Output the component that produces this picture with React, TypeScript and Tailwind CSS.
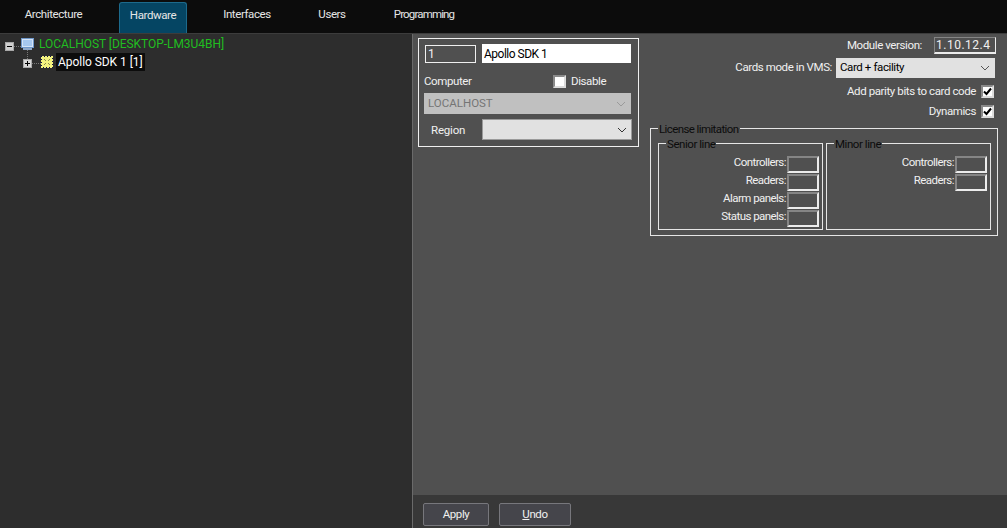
const font = "font-['Roboto','Liberation_Sans',sans-serif]"
const small = 'text-[11.5px] tracking-[-0.4px]'

function Tab({ label, active, w, tight }: { label: string; active?: boolean; w: string; tight?: boolean }) {
  return (
    <div
      className={`${w} h-[31px] pb-[5px] flex items-center justify-center rounded-t-[3px] text-[11.5px] ${
        tight ? 'tracking-[-0.85px]' : 'tracking-[-0.4px]'
      } text-[#e6e6e6] ${active ? 'bg-[#054563] border border-b-0 border-[#1d6a8c]' : ''}`}
    >
      {label}
    </div>
  )
}

function Check({ checked }: { checked?: boolean }) {
  return (
    <span className="w-[13px] h-[13px] bg-white border-2 border-[#8a8a8a] border-r-[#dcdcdc] border-b-[#dcdcdc] flex items-center justify-center shrink-0">
      {checked && (
        <svg width="9" height="9" viewBox="0 0 9 9">
          <path d="M1 4.5 L3.5 7 L8 1.5" fill="none" stroke="#000" strokeWidth="2" />
        </svg>
      )}
    </span>
  )
}

function Chevron({ color }: { color: string }) {
  return (
    <svg width="10" height="6" viewBox="0 0 10 6">
      <path d="M1 1 L5 5 L9 1" fill="none" stroke={color} strokeWidth="1" />
    </svg>
  )
}

function Limit({ label }: { label: string }) {
  return (
    <div className="flex items-center justify-end h-[18px] gap-px">
      <span className="pb-[2px] tracking-[-0.55px] text-[#f0f0f0]">{label}:</span>
      <span className="w-[32px] h-[17px] border-2 border-[#858585] border-r-[#ececec] border-b-[#ececec]" />
    </div>
  )
}

function Legend({ children, wide }: { children: string; wide?: boolean }) {
  return (
    <span
      className={`absolute left-[7px] top-[-7px] bg-[#505050] px-px leading-[14px] text-[#0c0c0c] ${
        wide ? 'tracking-[-0.6px]' : 'tracking-[-0.45px]'
      }`}
    >
      {children}
    </span>
  )
}

export default function App() {
  return (
    <div className={`${font} w-[1007px] h-[528px] flex flex-col bg-[#0c0c0c] overflow-hidden`}>
      <div className="h-[34px] flex items-start pt-[2px] pl-[8px] border-b border-[#3c3c3c]">
        <Tab label="Architecture" w="w-[91px]" />
        <div className="w-[20px]" />
        <Tab label="Hardware" active w="w-[68px]" />
        <div className="w-[20px]" />
        <Tab label="Interfaces" w="w-[80px]" />
        <Tab label="Users" w="w-[90px]" />
        <div className="w-[8px]" />
        <Tab label="Programming" tight w="w-[78px]" />
      </div>

      <div className="flex-1 flex min-h-0">
        <div className="w-[413px] shrink-0 bg-[#2d2d2d] border-r border-[#6a6a6a] pt-px pl-[5px] text-[12px] tracking-[-0.05px]">
          <div className="flex items-center h-[18px]">
            <span className="w-[9px] h-[9px] mt-[4px] bg-[#cfcfcf] border border-[#a8a8a8] flex items-center justify-center">
              <span className="w-[5px] h-px bg-black" />
            </span>
            <span className="w-[7px] mt-[4px] border-t border-dotted border-[#777]" />
            <svg width="13" height="13" viewBox="0 0 13 13" className="mr-[5px]">
              <rect x="0.5" y="0.5" width="12" height="9" fill="#d4e4f7" stroke="#6f97c9" />
              <rect x="2" y="2" width="9" height="6" fill="#a6c8ef" />
              <rect x="2" y="10" width="9" height="2" fill="#8fa8c8" />
            </svg>
            <span className="text-[#21bd21]">LOCALHOST [DESKTOP-LM3U4BH]</span>
          </div>
          <div className="flex items-center h-[18px] pl-[18px]">
            <span className="relative w-[9px] h-[9px] mt-[2px] bg-[#d8d8d8] border border-[#a8a8a8] flex items-center justify-center">
              <span className="w-[5px] h-px bg-black" />
              <span className="absolute w-px h-[5px] bg-black" />
              <span className="absolute left-[3px] top-[-10px] h-[9px] border-l border-dotted border-[#777]" />
            </span>
            <span className="w-[9px] mt-[2px] border-t border-dotted border-[#777]" />
            <svg width="12" height="12" viewBox="0 0 12 12" className="mr-[3px]">
              <rect width="12" height="12" fill="#f2f27e" />
              <path
                d="M0 0h1v1H0zM3 0h1v1H3zM6 0h1v1H6zM9 0h1v1H9zM0 3h1v1H0zM11 2h1v1h-1zM0 6h1v1H0zM11 5h1v1h-1zM0 9h1v1H0zM11 8h1v1h-1zM2 11h1v1H2zM5 11h1v1H5zM8 11h1v1H8zM11 11h1v1h-1z"
                fill="#10104a"
              />
              <path d="M3 3h1v1H3zM8 3h1v1H8zM4 4h1v1H4zM7 4h1v1H7zM4 7h1v1H4zM7 7h1v1H7zM3 8h1v1H3zM8 8h1v1H8z" fill="#8a8a50" />
            </svg>
            <span className="bg-[#0c0c0c] text-white h-[18px] w-[89px] pl-[2px] flex items-center whitespace-nowrap">
              Apollo SDK 1 [1]
            </span>
          </div>
        </div>

        <div className="flex-1 flex flex-col bg-[#505050] min-w-0">
          <div className={`flex-1 flex justify-between pt-[4px] pl-[5px] pr-[9px] ${small} text-[#f0f0f0]`}>
            <div className="w-[221px] h-[109px] border border-[#f0f0f0] pt-[5px] pl-[6px]">
              <div className="flex gap-[6px] items-start">
                <div className="w-[51px] h-[18px] mt-px border border-[#f0f0f0] flex items-center pl-[2px] text-[12px]">1</div>
                <div className="w-[149px] h-[19px] bg-white text-black flex items-center pl-[2px] text-[12px] tracking-[-0.5px]">Apollo SDK 1</div>
              </div>
              <div className="flex items-center h-[18px] mt-[9px] -ml-px">
                <span className="w-[129px] pt-[2px]">Computer</span>
                <Check />
                <span className="ml-[5px] pt-[2px]">Disable</span>
              </div>
              <div className="w-[207px] h-[21px] -ml-px bg-[#c0c0c0] mt-[3px] flex items-center justify-between pl-[4px] pr-[5px] text-[#757575] tracking-[0px]">
                LOCALHOST
                <Chevron color="#9a9a9a" />
              </div>
              <div className="flex items-center mt-[5px] -ml-px">
                <span className="w-[58px] pl-[7px] pt-[3px] tracking-[-0.2px]">Region</span>
                <div className="w-[150px] h-[21px] bg-[#e1e1e1] border border-[#9a9a9a] flex items-center justify-end pr-[4px]">
                  <Chevron color="#333" />
                </div>
              </div>
            </div>

            <div className="w-[348px] flex flex-col items-end">
              <div className="flex items-center h-[17px] -mt-px pr-[2px]">
                <span>Module version:</span>
                <span className="w-[62px] h-[17px] ml-[12px] border border-[#858585] border-r-[#ececec] border-b-2 border-b-[#ececec] flex items-center pl-[1px] text-[12px] tracking-[0.5px]">1.10.12.4</span>
              </div>
              <div className="flex items-center h-[20px] mt-[4px] pr-[3px]">
                <span className="mr-[4px]">Cards mode in VMS:</span>
                <div className="w-[159px] h-[20px] bg-[#e1e1e1] text-black flex items-center justify-between pl-[4px] pr-[5px]">
                  Card + facility
                  <Chevron color="#555" />
                </div>
              </div>
              <div className="flex items-center h-[20px] mt-[3px] pr-[4px] gap-[5px]">
                <span className="pt-[2px]">Add parity bits to card code</span>
                <Check checked />
              </div>
              <div className="flex items-center h-[20px] pr-[4px] gap-[5px]">
                <span className="pt-[2px]">Dynamics</span>
                <Check checked />
              </div>

              <div className="relative w-[348px] h-[108px] mt-[7px] border border-[#e6e6e6] pt-[14px] pl-[7px] flex gap-[3px]">
                <Legend wide>License limitation</Legend>
                <div className="relative w-[165px] h-[87px] border border-[#e6e6e6] pt-[11px] pr-[3px]">
                  <Legend>Senior line</Legend>
                  <Limit label="Controllers" />
                  <Limit label="Readers" />
                  <Limit label="Alarm panels" />
                  <Limit label="Status panels" />
                </div>
                <div className="relative w-[165px] h-[87px] border border-[#e6e6e6] pt-[11px] pr-[3px]">
                  <Legend>Minor line</Legend>
                  <Limit label="Controllers" />
                  <Limit label="Readers" />
                </div>
              </div>
            </div>
          </div>

          <div className={`h-[33px] bg-[#383838] flex items-start pt-[8px] pl-[10px] gap-[10px] ${small} text-[#f0f0f0]`}>
            <button className="w-[66px] h-[23px] bg-[#45454b] border border-[#77777c] rounded-[2px]">Apply</button>
            <button className="w-[72px] h-[23px] bg-[#45454b] border border-[#77777c] rounded-[2px]">
              <span className="underline">U</span>ndo
            </button>
          </div>
        </div>
      </div>
    </div>
  )
}
